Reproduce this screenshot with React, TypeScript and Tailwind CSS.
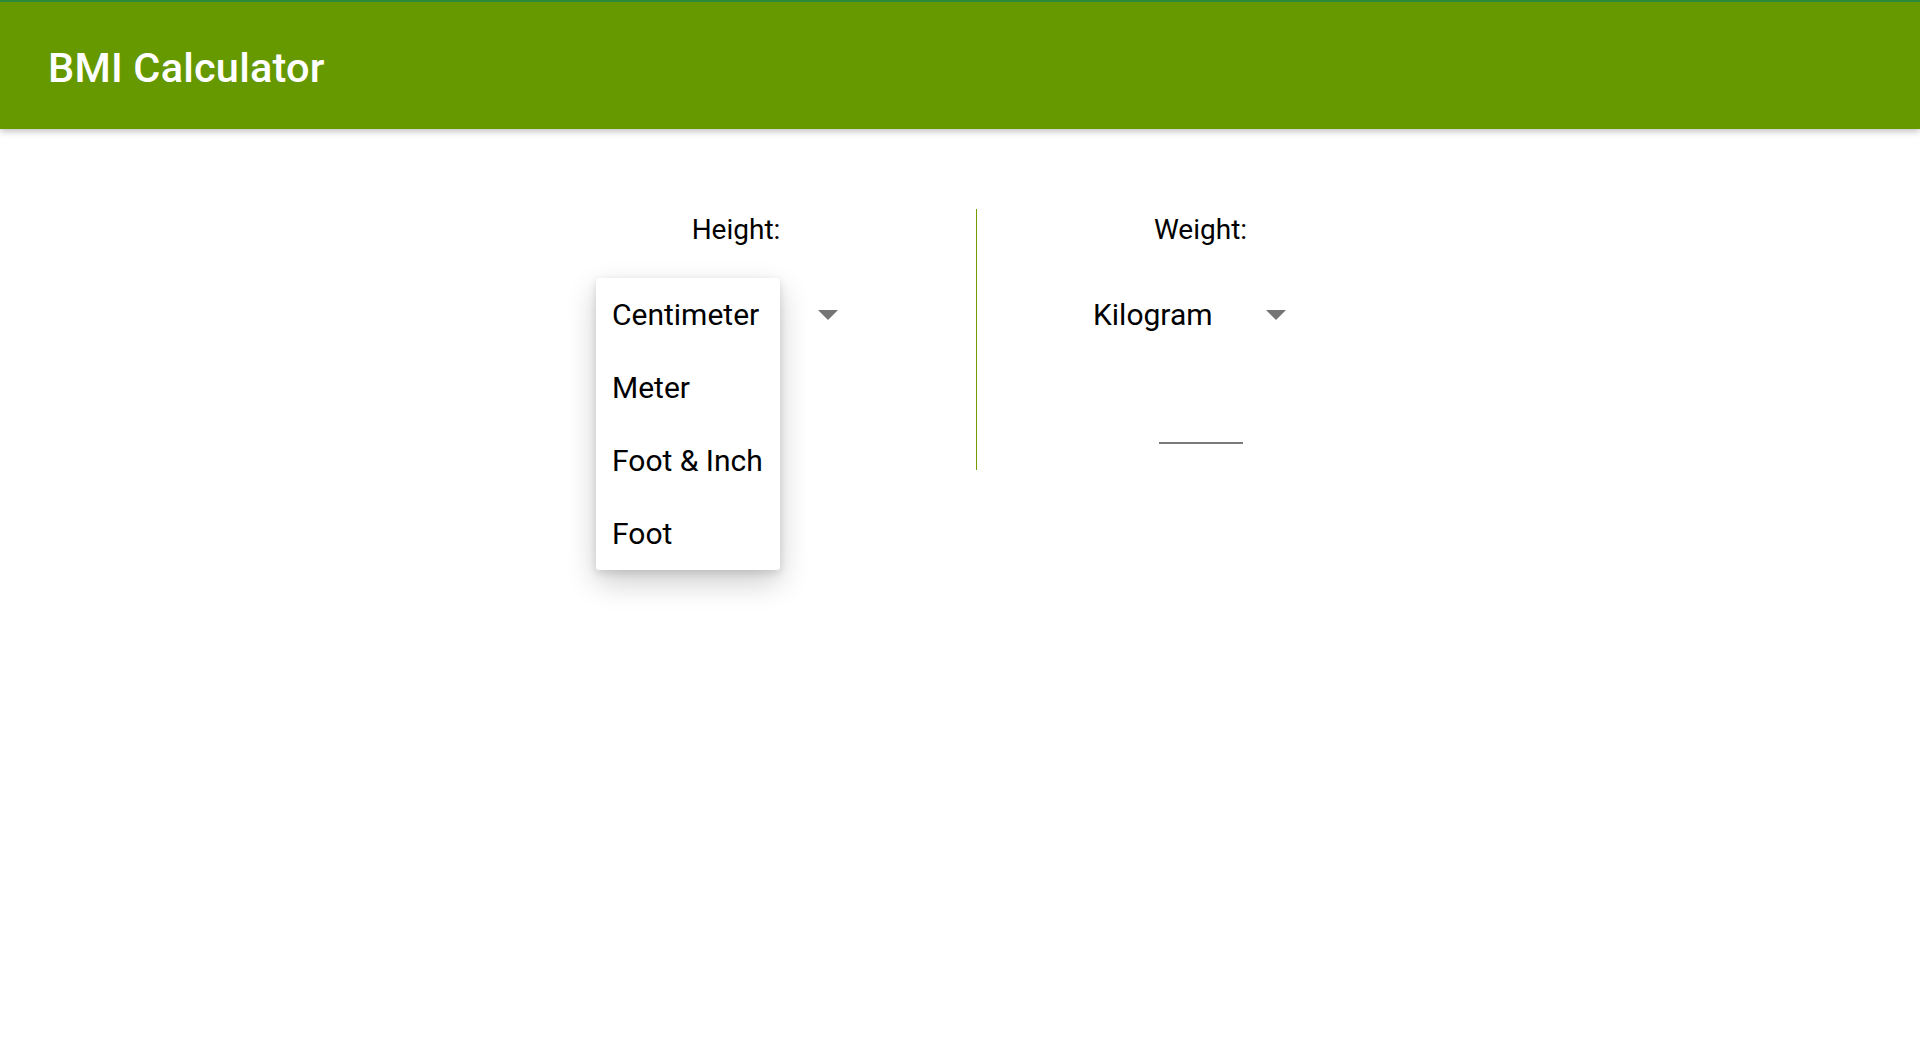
import React from "react";

function Arrow() {
  return (
    <svg width="20" height="10" viewBox="0 0 20 10" className="shrink-0">
      <path d="M0 0 L20 0 L10 10 Z" fill="#757575" />
    </svg>
  );
}

export default function App() {
  return (
    <div
      className="min-h-screen w-full bg-white text-black"
      style={{ fontFamily: "Roboto, 'Noto Sans', sans-serif" }}
    >
      <header className="relative z-10 flex h-[129px] items-center border-t-2 border-[#2a8c3a] bg-[#669900] pl-[48px] shadow-[0_3px_6px_rgba(0,0,0,0.22)]">
        <h1 className="pt-[4px] text-[41.5px] font-medium leading-none tracking-[0.2px] text-white">
          BMI Calculator
        </h1>
      </header>

      <main className="flex justify-center pt-[80px]">
        {/* Height column */}
        <div className="relative flex w-[480px] flex-col">
          <div className="pt-[3px] text-center text-[28px] leading-[36px] text-black">
            Height:
          </div>
          <div className="relative mt-[30px] ml-[100px] flex h-[73px] items-center pl-[17px]">
            <span className="text-[30px] leading-[73px]">Centimeter</span>
            <span className="ml-[58px]">
              <Arrow />
            </span>
            {/* open popup */}
            <div className="absolute left-0 top-0 z-20 w-[184px] rounded-[3px] bg-white shadow-[0_12px_30px_rgba(0,0,0,0.2),0_3px_8px_rgba(0,0,0,0.12)]">
              {["Centimeter", "Meter", "Foot & Inch", "Foot"].map((t) => (
                <div
                  key={t}
                  className="h-[73px] whitespace-nowrap pl-[16px] text-[30px] leading-[73px] text-black"
                >
                  {t}
                </div>
              ))}
            </div>
          </div>
          <div className="mx-auto mt-[91px] h-[2px] w-[84px] bg-[#7a7a7a]" />
        </div>

        {/* Divider */}
        <div className="h-[261px] w-px bg-[#789c00]" />

        {/* Weight column */}
        <div className="flex w-[447px] flex-col">
          <div className="pt-[3px] text-center text-[28px] leading-[36px] text-black">
            Weight:
          </div>
          <div className="mt-[30px] ml-[99px] flex h-[73px] items-center pl-[17px]">
            <span className="text-[30px] leading-[73px]">Kilogram</span>
            <span className="ml-[53px]">
              <Arrow />
            </span>
          </div>
          <div className="mx-auto mt-[91px] h-[2px] w-[84px] bg-[#7a7a7a]" />
        </div>
      </main>
    </div>
  );
}
